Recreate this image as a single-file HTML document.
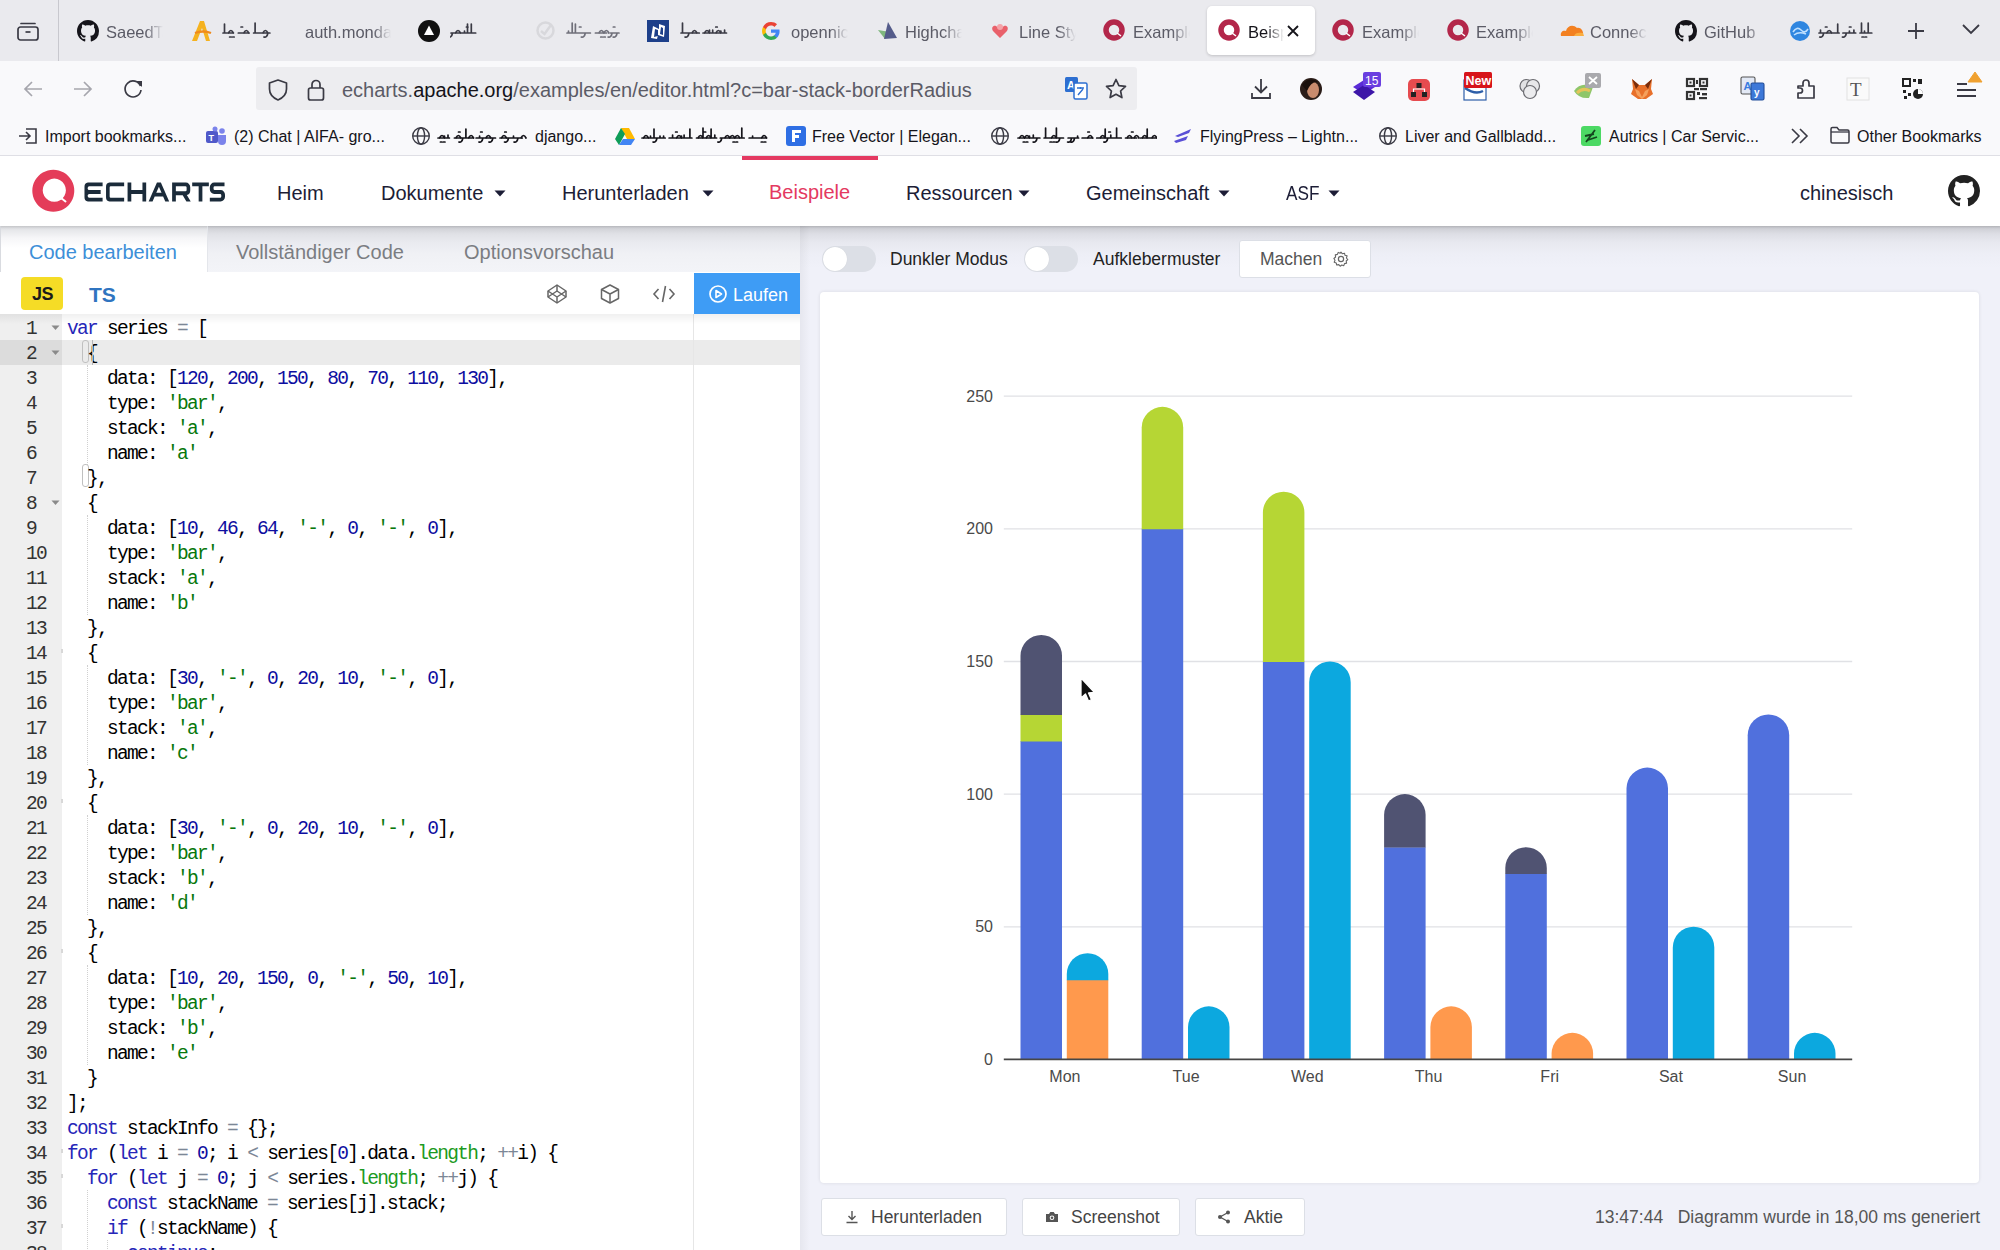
<!DOCTYPE html>
<html><head><meta charset="utf-8"><style>
*{box-sizing:border-box;margin:0;padding:0}
html,body{width:2000px;height:1250px;overflow:hidden;background:#fff;font-family:"Liberation Sans",sans-serif;position:relative}
.a{position:absolute}
#tabbar{left:0;top:0;width:2000px;height:61px;background:#eaeaee}
#toolbar{left:0;top:61px;width:2000px;height:95px;background:#f9f9fb}
#bmsep{left:0;top:155px;width:2000px;height:1px;background:#e0e0e6}
#header{left:0;top:156px;width:2000px;height:70px;background:#fff;z-index:3;box-shadow:0 1px 2px rgba(0,0,0,.08)}
#left{left:0;top:226px;width:800px;height:1024px;background:#fff;overflow:hidden}
#right{left:800px;top:226px;width:1200px;height:1024px;background:#f0f1f9}
.tt{top:22px;font-size:16.5px;line-height:20px;white-space:nowrap;overflow:hidden;-webkit-mask-image:linear-gradient(90deg,#000 calc(100% - 18px),transparent)}
.url{font-size:20px;line-height:27px;white-space:nowrap}
.bm{top:127px;font-size:16px;line-height:20px;color:#15141a;white-space:nowrap}
.nav{font-size:20px;line-height:28px;color:#1c1d36;white-space:nowrap}
.etab{top:13.5px;font-size:20px;line-height:24px;white-space:nowrap}
.gl{left:26px;width:40px;font-family:"Liberation Mono",monospace;font-size:19.5px;line-height:25px;color:#333;letter-spacing:-1.7px}
.cl{left:67px;font-family:"Liberation Mono",monospace;font-size:19.5px;line-height:25px;color:#000;white-space:pre;letter-spacing:-1.7px}
.cl .k{color:#2626b8}.cl .n{color:#0d0da0}.cl .s{color:#08780c}.cl .o{color:#7c8796}.cl .l{color:#1c9a22}
.ctl{top:22px;font-size:17.5px;line-height:22px;color:#222;white-space:nowrap}
.ax{font-family:"Liberation Sans",sans-serif;font-size:16px;fill:#4a4a4a}
</style></head><body>
<div id="tabbar" class="a">
<svg class="a" style="left:16px;top:20px" width="24" height="22" viewBox="0 0 24 22"><rect x="2" y="7" width="20" height="13" rx="2.5" fill="none" stroke="#3a3a44" stroke-width="1.7"/><path d="M5 3.5 H19" stroke="#3a3a44" stroke-width="1.7" stroke-linecap="round"/><path d="M9.5 12 H14.5" stroke="#3a3a44" stroke-width="1.7"/></svg>
<div class="a" style="left:58px;top:0;width:1px;height:61px;background:#c8c8ce"></div>
<svg class="a" style="left:77px;top:20px" width="22" height="22" viewBox="0 0 16 16"><path fill="#15141a" d="M8 0C3.58 0 0 3.58 0 8c0 3.54 2.29 6.53 5.47 7.59.4.07.55-.17.55-.38 0-.19-.01-.82-.01-1.49-2.01.37-2.53-.49-2.69-.94-.09-.23-.48-.94-.82-1.13-.28-.15-.68-.52-.01-.53.63-.01 1.08.58 1.23.82.72 1.21 1.87.87 2.33.66.07-.52.28-.87.51-1.07-1.78-.2-3.64-.89-3.64-3.95 0-.87.31-1.59.82-2.15-.08-.2-.36-1.02.08-2.12 0 0 .67-.21 2.2.82.64-.18 1.32-.27 2-.27.68 0 1.36.09 2 .27 1.53-1.04 2.2-.82 2.2-.82.44 1.1.16 1.92.08 2.12.51.56.82 1.27.82 2.15 0 3.07-1.87 3.75-3.65 3.95.29.25.54.73.54 1.48 0 1.07-.01 1.93-.01 2.2 0 .21.15.46.55.38A8.013 8.013 0 0016 8c0-4.42-3.58-8-8-8z"/></svg>
<div class="a tt" style="left:106px;top:22px;width:57px;color:#5b5b66">SaeedTaherian</div>
<svg class="a" style="left:189px;top:19px" width="24" height="24" viewBox="0 0 24 24"><path d="M3 22 L11 2 L15 2 L21 22 L17 22 L13 9 L8 22 Z" fill="#f5b21f"/><path d="M6 14 Q14 11 22 14" stroke="#f08a1c" stroke-width="2.4" fill="none"/></svg>
<svg class="a" style="left:222px;top:22px;opacity:1.0" width="56" height="18"><path d="M1.0 11 H11.4 M2.5 11 V2 M6.4 11 q2.5 -5 5 0 M7.6 15 h1.6 M10.6 15 h1.6 M16.3 11 H27.2 M21.8 11 q2.5 -5 5 0 M19.0 5 h1.6 M31.6 11 H47.9 M33.1 11 V1 M40.9 11 q2.5 -5 5 0 M45.9 11 q-1 5 -4 4" stroke="#3a3a44" stroke-width="1.7" fill="none" stroke-linecap="round"/></svg>
<div class="a tt" style="left:305px;top:22px;width:86px;color:#5b5b66">auth.monday.com</div>
<svg class="a" style="left:418px;top:20px" width="22" height="22" viewBox="0 0 22 22"><circle cx="11" cy="11" r="11" fill="#111"/><path d="M11 5.5 L16 15 L6 15 Z" fill="#fff"/></svg>
<svg class="a" style="left:450px;top:22px;opacity:1.0" width="33" height="18"><path d="M1.0 11 H25.7 M2.5 11 q-1 5 -4 4 M5.5 11 q2.5 -5 5 0 M14.5 11 V9 M17.5 11 V2 M21.3 11 V2 M16.4 5 h1.6" stroke="#3a3a44" stroke-width="1.7" fill="none" stroke-linecap="round"/></svg>
<svg class="a" style="left:535px;top:20px" width="21" height="21" viewBox="0 0 21 21"><circle cx="10.5" cy="10.5" r="8" fill="none" stroke="#d8d8dc" stroke-width="2.5"/><path d="M6 11 L9.5 14 L16 5" stroke="#d8d8dc" stroke-width="2.5" fill="none"/></svg>
<svg class="a" style="left:566px;top:22px;opacity:0.85" width="54" height="18"><path d="M1.0 11 H24.4 M2.5 11 V9 M6.2 11 V1 M9.4 11 V2 M19.3 11 q-1 5 -4 4 M13.4 5 h1.6 M29.4 11 H40.6 M32.9 11 q2.5 -5 5 0 M37.9 11 q2.5 -5 5 0 M34.7 15 h1.6 M37.7 15 h1.6 M44.6 11 H53.0 M46.1 11 q-1 5 -4 4 M51.1 11 q-1 5 -4 4 M47.3 5 h1.6" stroke="#5b5b66" stroke-width="1.7" fill="none" stroke-linecap="round"/></svg>
<svg class="a" style="left:647px;top:20px" width="22" height="22" viewBox="0 0 22 22"><rect x="0" y="0" width="22" height="22" fill="#1d3f8a"/><path d="M4 18 L6 6 L12 9 L12 4 L18 6 L17 17 L11 15 L10 19 Z" fill="#fff"/><path d="M7 17 L8 9 L11 10 L11 16 Z M13 14 L14 7 L16 8 L16 15 Z" fill="#1d3f8a"/></svg>
<svg class="a" style="left:680px;top:22px;opacity:1.0" width="54" height="18"><path d="M1.0 11 H19.3 M2.5 11 V1 M9.0 11 q-1 5 -4 4 M12.0 11 q2.5 -5 5 0 M23.0 11 H46.5 M24.5 11 q2.5 -5 5 0 M29.5 11 V8 M32.7 11 V8 M35.9 11 q2.5 -5 5 0 M40.9 11 V9 M44.6 11 V8 M35.7 5 h1.6" stroke="#3a3a44" stroke-width="1.7" fill="none" stroke-linecap="round"/></svg>
<svg class="a" style="left:761px;top:21px" width="20" height="20" viewBox="0 0 20 20"><path d="M18.6 10.2c0-.6-.1-1.2-.2-1.8H10v3.4h4.8c-.2 1.1-.8 2-1.8 2.7v2.2h2.9c1.7-1.6 2.7-3.9 2.7-6.5z" fill="#4285f4"/><path d="M10 19c2.4 0 4.5-.8 5.9-2.2L13 14.6c-.8.5-1.8.9-3 .9-2.3 0-4.3-1.6-5-3.7H2v2.3C3.4 17 6.5 19 10 19z" fill="#34a853"/><path d="M5 11.8c-.2-.5-.3-1.1-.3-1.8s.1-1.2.3-1.8V5.9H2C1.4 7.1 1 8.5 1 10s.4 2.9 1 4.1l3-2.3z" fill="#fbbc05"/><path d="M10 4.6c1.3 0 2.5.5 3.4 1.3l2.6-2.6C14.5 1.9 12.4 1 10 1 6.5 1 3.4 3 2 5.9l3 2.3c.7-2.1 2.7-3.6 5-3.6z" fill="#ea4335"/></svg>
<div class="a tt" style="left:791px;top:22px;width:57px;color:#5b5b66">opennic.org</div>
<svg class="a" style="left:876px;top:20px" width="22" height="22" viewBox="0 0 22 22"><path d="M2 10 L9 19 L14 12 Z" fill="#7fb77e"/><path d="M12 2 L8 19 L21 18 Z" fill="#545b8a"/></svg>
<div class="a tt" style="left:905px;top:22px;width:57px;color:#5b5b66">Highcharts</div>
<svg class="a" style="left:990px;top:21px" width="20" height="20" viewBox="0 0 20 20"><path d="M10 17 L3 10 C1 7 3 4 6 5 L10 8 L14 5 C17 4 19 7 17 10 Z" fill="#e9616b"/><circle cx="10" cy="6" r="3" fill="#f5a3a8"/></svg>
<div class="a tt" style="left:1019px;top:22px;width:57px;color:#5b5b66">Line Style</div>
<svg class="a" style="left:1103px;top:19px" width="22" height="22" viewBox="0 0 22 22"><circle cx="11" cy="11" r="8" fill="none" stroke="#b3274a" stroke-width="5.5"/><path d="M14 14 l4 3" stroke="#fff" stroke-width="1.5"/></svg>
<div class="a tt" style="left:1133px;top:22px;width:57px;color:#5b5b66">Examples</div>
<div class="a" style="left:1207px;top:6px;width:108px;height:49px;background:#fff;border-radius:5px;box-shadow:0 1px 3px rgba(0,0,0,.18)"></div>
<svg class="a" style="left:1218px;top:19px" width="22" height="22" viewBox="0 0 22 22"><circle cx="11" cy="11" r="8" fill="none" stroke="#b3274a" stroke-width="5.5"/><path d="M14 14 l4 3" stroke="#fff" stroke-width="1.5"/></svg>
<div class="a tt" style="left:1248px;top:22px;width:36px;color:#15141a">Beispiele</div>
<svg class="a" style="left:1286px;top:24px" width="14" height="14" viewBox="0 0 14 14"><path d="M2 2 L12 12 M12 2 L2 12" stroke="#15141a" stroke-width="1.8"/></svg>
<svg class="a" style="left:1332px;top:19px" width="22" height="22" viewBox="0 0 22 22"><circle cx="11" cy="11" r="8" fill="none" stroke="#b3274a" stroke-width="5.5"/><path d="M14 14 l4 3" stroke="#fff" stroke-width="1.5"/></svg>
<div class="a tt" style="left:1362px;top:22px;width:57px;color:#5b5b66">Examples</div>
<svg class="a" style="left:1447px;top:19px" width="22" height="22" viewBox="0 0 22 22"><circle cx="11" cy="11" r="8" fill="none" stroke="#b3274a" stroke-width="5.5"/><path d="M14 14 l4 3" stroke="#fff" stroke-width="1.5"/></svg>
<div class="a tt" style="left:1476px;top:22px;width:57px;color:#5b5b66">Examples</div>
<svg class="a" style="left:1559px;top:23px" width="26" height="14" viewBox="0 0 26 14"><path d="M2 13 C1 9 4 7 7 8 C8 3 14 1 18 5 C21 4 25 7 24 13 Z" fill="#f38020"/><path d="M15 13 C16 10 19 9 24 10 L25 13 Z" fill="#faae40"/></svg>
<div class="a tt" style="left:1590px;top:22px;width:57px;color:#5b5b66">Connect</div>
<svg class="a" style="left:1675px;top:20px" width="22" height="22" viewBox="0 0 16 16"><path fill="#15141a" d="M8 0C3.58 0 0 3.58 0 8c0 3.54 2.29 6.53 5.47 7.59.4.07.55-.17.55-.38 0-.19-.01-.82-.01-1.49-2.01.37-2.53-.49-2.69-.94-.09-.23-.48-.94-.82-1.13-.28-.15-.68-.52-.01-.53.63-.01 1.08.58 1.23.82.72 1.21 1.87.87 2.33.66.07-.52.28-.87.51-1.07-1.78-.2-3.64-.89-3.64-3.95 0-.87.31-1.59.82-2.15-.08-.2-.36-1.02.08-2.12 0 0 .67-.21 2.2.82.64-.18 1.32-.27 2-.27.68 0 1.36.09 2 .27 1.53-1.04 2.2-.82 2.2-.82.44 1.1.16 1.92.08 2.12.51.56.82 1.27.82 2.15 0 3.07-1.87 3.75-3.65 3.95.29.25.54.73.54 1.48 0 1.07-.01 1.93-.01 2.2 0 .21.15.46.55.38A8.013 8.013 0 0016 8c0-4.42-3.58-8-8-8z"/></svg>
<div class="a tt" style="left:1704px;top:22px;width:60px;color:#5b5b66">GitHub</div>
<svg class="a" style="left:1789px;top:20px" width="22" height="22" viewBox="0 0 22 22"><circle cx="11" cy="11" r="10" fill="#2f86e0"/><path d="M4 12 Q8 6 12 10 T19 9 M5 15 Q10 11 17 14" stroke="#bfe0ff" stroke-width="1.6" fill="none"/></svg>
<svg class="a" style="left:1818px;top:22px;opacity:1.0" width="57" height="18"><path d="M1.0 11 H21.1 M2.5 11 V8 M5.7 11 q-1 5 -4 4 M8.7 11 q2.5 -5 5 0 M19.7 11 V2 M7.4 5 h1.6 M24.9 11 H37.7 M28.4 11 q-1 5 -4 4 M31.4 11 V9 M35.9 11 V8 M31.4 5 h1.6 M42.0 11 H53.8 M43.5 11 V1 M46.5 11 V9 M50.2 11 V1 M44.0 15 h1.6 M47.0 15 h1.6" stroke="#3a3a44" stroke-width="1.7" fill="none" stroke-linecap="round"/></svg>
<svg class="a" style="left:1906px;top:21px" width="20" height="20" viewBox="0 0 20 20"><path d="M10 2 V18 M2 10 H18" stroke="#3a3a44" stroke-width="1.8"/></svg>
<svg class="a" style="left:1961px;top:22px" width="20" height="14" viewBox="0 0 20 14"><path d="M2 3 L10 11 L18 3" stroke="#3a3a44" stroke-width="1.8" fill="none"/></svg>
</div>
<div id="toolbar" class="a">
<svg class="a" style="left:22px;top:18px" width="22" height="20" viewBox="0 0 22 20"><path d="M20 10 H3 M10 3 L3 10 L10 17" stroke="#a6a6ad" stroke-width="1.7" fill="none"/></svg>
<svg class="a" style="left:72px;top:18px" width="22" height="20" viewBox="0 0 22 20"><path d="M2 10 H19 M12 3 L19 10 L12 17" stroke="#a6a6ad" stroke-width="1.7" fill="none"/></svg>
<svg class="a" style="left:122px;top:17px" width="22" height="22" viewBox="0 0 22 22"><path d="M18.5 8 A8 8 0 1 0 19 12" stroke="#3a3a44" stroke-width="1.7" fill="none"/><path d="M14 3 L20 3 L20 9 Z" fill="#3a3a44"/></svg>
<div class="a" style="left:256px;top:6px;width:881px;height:43px;background:#ededf0;border-radius:3px"></div>
<svg class="a" style="left:267px;top:17px" width="22" height="24" viewBox="0 0 22 24"><path d="M11 2 L19.5 5 V11 C19.5 16.5 15.5 20 11 22 C6.5 20 2.5 16.5 2.5 11 V5 Z" stroke="#3a3a44" stroke-width="1.7" fill="none" stroke-linejoin="round"/></svg>
<svg class="a" style="left:306px;top:17px" width="20" height="24" viewBox="0 0 20 24"><rect x="2.5" y="10" width="15" height="12" rx="2" stroke="#3a3a44" stroke-width="1.7" fill="none"/><path d="M6 10 V6.5 a4 4 0 0 1 8 0 V10" stroke="#3a3a44" stroke-width="1.7" fill="none"/></svg>
<div class="a url" style="left:342px;top:16px"><span style="color:#5b5b66">echarts.</span><span style="color:#15141a">apache.org</span><span style="color:#5b5b66">/examples/en/editor.html?c=bar-stack-borderRadius</span></div>
<svg class="a" style="left:1064px;top:15px" width="24" height="24" viewBox="0 0 24 24"><rect x="1" y="1" width="13" height="15" rx="1.5" fill="#2d6fd1"/><text x="3" y="13" font-size="11" font-family="Liberation Sans" font-weight="bold" fill="#fff">A</text><rect x="10" y="7" width="13" height="16" rx="1.5" fill="#fff" stroke="#2d6fd1" stroke-width="1.5"/><path d="M13 12 H20 M16.5 11 V13 M14 19 L19 13" stroke="#2d6fd1" stroke-width="1.4" fill="none"/></svg>
<svg class="a" style="left:1104px;top:16px" width="24" height="24" viewBox="0 0 24 24"><path d="M12 2.5 L14.9 8.6 L21.5 9.4 L16.6 14 L17.9 20.6 L12 17.3 L6.1 20.6 L7.4 14 L2.5 9.4 L9.1 8.6 Z" stroke="#3a3a44" stroke-width="1.7" fill="none" stroke-linejoin="round"/></svg>
<svg class="a" style="left:1249px;top:16px" width="24" height="24" viewBox="0 0 24 24"><path d="M12 2 V15 M6 9.5 L12 15.5 L18 9.5 M3 16 V21 H21 V16" stroke="#3a3a44" stroke-width="1.8" fill="none"/></svg>
<svg class="a" style="left:1299px;top:16px" width="24" height="24" viewBox="0 0 24 24"><circle cx="12" cy="12" r="11" fill="#2b1d18"/><ellipse cx="14" cy="13" rx="6" ry="8" fill="#c98c6e"/><path d="M3 8 Q10 -1 19 5 Q12 4 8 14 Z" fill="#1a100c"/></svg>
<svg class="a" style="left:1350px;top:10px" width="34" height="32" viewBox="0 0 34 32"><path d="M3 16 L14 9 L25 16 L14 23 Z" fill="#5a2bd6"/><path d="M3 21 L14 14 L25 21 L14 29 Z" fill="#3d16a8"/><rect x="13" y="1" width="18" height="15" rx="2" fill="#6a3fe0"/><text x="15" y="13.5" font-size="12" font-family="Liberation Sans" fill="#fff">15</text></svg>
<svg class="a" style="left:1407px;top:17px" width="24" height="24" viewBox="0 0 24 24"><rect x="1" y="1" width="22" height="22" rx="5" fill="#e64b4f"/><rect x="9.5" y="5" width="5" height="5" fill="#222"/><rect x="4" y="14" width="5" height="5" fill="#222"/><rect x="15" y="14" width="5" height="5" fill="#222"/><path d="M6.5 14 V11 H17.5 V14" stroke="#fff" stroke-width="1.2" fill="none"/></svg>
<svg class="a" style="left:1463px;top:10px" width="30" height="30" viewBox="0 0 30 30"><rect x="1" y="9" width="22" height="20" fill="#fff" stroke="#2d5ea8" stroke-width="1.2"/><path d="M2 17 Q12 24 20 20" stroke="#2d5ea8" stroke-width="2.5" fill="none"/><rect x="1" y="1" width="28" height="16" rx="1.5" fill="#d7141a"/><text x="2.5" y="13.5" font-size="12.5" font-family="Liberation Sans" font-weight="bold" fill="#fff">New</text></svg>
<svg class="a" style="left:1518px;top:16px" width="24" height="24" viewBox="0 0 24 24"><circle cx="8.5" cy="9" r="6.5" fill="#e2e2e4" stroke="#6b6b70" stroke-width="1.2"/><circle cx="15" cy="9" r="6.5" fill="#e8e8ea" stroke="#6b6b70" stroke-width="1.2"/><circle cx="12" cy="15" r="6.5" fill="#ececee" stroke="#6b6b70" stroke-width="1.2"/></svg>
<svg class="a" style="left:1571px;top:10px" width="32" height="32" viewBox="0 0 32 32"><path d="M3 20 Q10 10 22 16 L18 27 Q8 28 3 20 Z" fill="#8fc66a"/><path d="M6 22 Q12 16 19 20" stroke="#e5c45a" stroke-width="3" fill="none"/><rect x="14" y="2" width="16" height="15" rx="2" fill="#a9a9ad"/><path d="M18 6 L26 13 M26 6 L18 13" stroke="#fff" stroke-width="1.8"/></svg>
<svg class="a" style="left:1630px;top:16px" width="24" height="24" viewBox="0 0 24 24"><path d="M2 2 L9 8 L15 8 L22 2 L21 12 L23 17 L16 22 L8 22 L1 17 L3 12 Z" fill="#e8702a"/><path d="M5 12 L9 14 L12 20 L15 14 L19 12 L17 18 L12 22 L7 18 Z" fill="#f5a05c"/><path d="M2 2 L9 8 L6 12 Z M22 2 L15 8 L18 12 Z" fill="#7a2d0c"/></svg>
<svg class="a" style="left:1685px;top:16px" width="24" height="24" viewBox="0 0 24 24"><g fill="none" stroke="#333" stroke-width="2.2"><rect x="2" y="2" width="7" height="7"/><rect x="15" y="2" width="7" height="7"/><rect x="2" y="15" width="7" height="7"/></g><g fill="#333"><rect x="4.5" y="4.5" width="2" height="2"/><rect x="17.5" y="4.5" width="2" height="2"/><rect x="4.5" y="17.5" width="2" height="2"/><rect x="11" y="3" width="2" height="4"/><rect x="9" y="11" width="5" height="2.2"/><rect x="15" y="11" width="7" height="2.2"/><rect x="12" y="15" width="3" height="3"/><rect x="17" y="16" width="5" height="2.4"/><rect x="14" y="20" width="8" height="2.2"/></g></svg>
<svg class="a" style="left:1740px;top:15px" width="26" height="26" viewBox="0 0 26 26"><rect x="1" y="1" width="14" height="17" rx="1.5" fill="#e3e9f5" stroke="#555" stroke-width="1.1"/><text x="3.5" y="14" font-size="11" font-family="Liberation Sans" font-weight="bold" fill="#3a7be0">A</text><rect x="11" y="7" width="13" height="17" rx="1.5" fill="#3d78d8" stroke="#234e9a" stroke-width="1.1"/><text x="14" y="20" font-size="10" font-family="Liberation Sans" font-weight="bold" fill="#fff">y</text></svg>
<svg class="a" style="left:1794px;top:16px" width="24" height="24" viewBox="0 0 24 24"><path d="M4 9 H9 V6 a3 3 0 0 1 6 0 V9 H20 V21 H4 V16 h2 a2.5 2.5 0 0 0 0-5 H4 Z" stroke="#3a3a44" stroke-width="1.7" fill="none" stroke-linejoin="round"/></svg>
<svg class="a" style="left:1846px;top:16px" width="24" height="24" viewBox="0 0 24 24"><rect x="1" y="1" width="22" height="22" fill="#fafafa" stroke="#e2e2e2" stroke-width="1"/><text x="4" y="19" font-size="19" font-family="Liberation Serif" fill="#555">T</text></svg>
<svg class="a" style="left:1901px;top:16px" width="24" height="24" viewBox="0 0 24 24"><g fill="none" stroke="#222" stroke-width="2"><rect x="2" y="2" width="7" height="7"/></g><g fill="#222"><rect x="12" y="2" width="3" height="3"/><rect x="17" y="2" width="4" height="5"/><rect x="2" y="13" width="3" height="3"/><rect x="7" y="16" width="3" height="3"/><rect x="3" y="19" width="3" height="3"/><circle cx="17" cy="17" r="5"/></g><path d="M17 17 V12 A5 5 0 0 1 22 17 Z" fill="#fff"/></svg>
<svg class="a" style="left:1954px;top:8px" width="30" height="32" viewBox="0 0 30 32"><path d="M3 15 H13 M3 21 H22 M3 27 H22" stroke="#3a3a44" stroke-width="1.8"/><path d="M21 3 L28 13 H14 Z" fill="#f0a130" stroke="#f0a130" stroke-width="1" stroke-linejoin="round"/></svg>
</div>
<svg class="a" style="left:17px;top:126px" width="22" height="20" viewBox="0 0 22 20"><path d="M9 3 H19 V17 H9 M2 10 H13 M9 6 L13 10 L9 14" stroke="#3a3a44" stroke-width="1.6" fill="none"/></svg>
<div class="a bm" style="left:45px">Import bookmarks...</div>
<svg class="a" style="left:205px;top:126px" width="22" height="20" viewBox="0 0 22 20"><rect x="1" y="5" width="12" height="12" rx="2" fill="#5059c9"/><text x="3.5" y="14.5" font-size="9" font-weight="bold" font-family="Liberation Sans" fill="#fff">T</text><circle cx="17" cy="5" r="2.8" fill="#7b83eb"/><path d="M13 9 H21 V15 a4 4 0 0 1 -8 0 Z" fill="#7b83eb"/><circle cx="10" cy="3" r="2.5" fill="#7b83eb"/></svg>
<div class="a bm" style="left:234px">(2) Chat | AIFA- gro...</div>
<svg class="a" style="left:411px;top:126px" width="20" height="20" viewBox="0 0 20 20"><circle cx="10" cy="10" r="8.3" fill="none" stroke="#3a3a44" stroke-width="1.4"/><ellipse cx="10" cy="10" rx="3.6" ry="8.3" fill="none" stroke="#3a3a44" stroke-width="1.4"/><path d="M2 10 H18" stroke="#3a3a44" stroke-width="1.4"/></svg>
<svg class="a" style="left:437px;top:127px;opacity:1.0" width="95" height="18"><path d="M1.0 11 H12.4 M2.5 11 q2.5 -5 5 0 M7.5 11 V9 M11.0 11 V8 M3.4 15 h1.6 M6.4 15 h1.6 M17.4 11 H35.1 M18.9 11 q2.5 -5 5 0 M25.9 11 q-1 5 -4 4 M28.9 11 V2 M31.6 11 q2.5 -5 5 0 M21.5 5 h1.6 M39.1 11 H58.5 M42.6 11 V9 M45.9 11 q-1 5 -4 4 M48.9 11 q2.5 -5 5 0 M55.9 11 q-1 5 -4 4 M43.6 5 h1.6 M63.0 11 H85.3 M64.5 11 q2.5 -5 5 0 M71.5 11 q-1 5 -4 4 M76.5 11 V9 M81.0 11 q-1 5 -4 4 M84.0 11 q2.5 -5 5 0 M67.7 5 h1.6" stroke="#15141a" stroke-width="1.7" fill="none" stroke-linecap="round"/></svg>
<div class="a bm" style="left:535px">django...</div>
<svg class="a" style="left:614px;top:126px" width="22" height="20" viewBox="0 0 22 20"><path d="M7 2 H15 L21 13 H13 Z" fill="#ffba00"/><path d="M7 2 L1 13 L5 19 L11 8 Z" fill="#0f9d58"/><path d="M5 19 H17 L21 13 H9 Z" fill="#4285f4"/></svg>
<svg class="a" style="left:641px;top:127px;opacity:1.0" width="128" height="18"><path d="M1.0 11 H24.2 M2.5 11 q2.5 -5 5 0 M9.5 11 V9 M13.0 11 V2 M16.0 11 q-1 5 -4 4 M19.0 11 V9 M22.6 11 V9 M28.1 11 H50.9 M31.6 11 V8 M35.5 11 q2.5 -5 5 0 M40.5 11 V9 M43.1 11 V8 M48.9 11 V2 M34.6 5 h1.6 M55.5 11 H75.6 M57.0 11 q2.5 -5 5 0 M62.0 11 V1 M65.1 11 q2.5 -5 5 0 M70.1 11 V2 M73.8 11 V8 M63.1 5 h1.6 M79.3 11 H103.2 M80.8 11 q-1 5 -4 4 M83.8 11 q2.5 -5 5 0 M88.8 11 q2.5 -5 5 0 M93.8 11 q2.5 -5 5 0 M100.8 11 V1 M92.0 15 h1.6 M95.0 15 h1.6 M108.1 11 H124.2 M111.6 11 V9 M120.6 11 q2.5 -5 5 0 M120.2 15 h1.6 M123.2 15 h1.6" stroke="#15141a" stroke-width="1.7" fill="none" stroke-linecap="round"/></svg>
<svg class="a" style="left:785px;top:125px" width="22" height="22" viewBox="0 0 22 22"><rect x="1" y="1" width="20" height="20" rx="3" fill="#2f6fe4"/><path d="M7 5 H16 V8 H10 V10 H14 V13 H10 V17 H7 Z" fill="#fff"/></svg>
<div class="a bm" style="left:812px">Free Vector | Elegan...</div>
<svg class="a" style="left:990px;top:126px" width="20" height="20" viewBox="0 0 20 20"><circle cx="10" cy="10" r="8.3" fill="none" stroke="#3a3a44" stroke-width="1.4"/><ellipse cx="10" cy="10" rx="3.6" ry="8.3" fill="none" stroke="#3a3a44" stroke-width="1.4"/><path d="M2 10 H18" stroke="#3a3a44" stroke-width="1.4"/></svg>
<svg class="a" style="left:1017px;top:127px;opacity:1.0" width="140" height="18"><path d="M1.0 11 H22.9 M2.5 11 q2.5 -5 5 0 M7.5 11 q2.5 -5 5 0 M12.5 11 V9 M16.3 11 V8 M20.1 11 q-1 5 -4 4 M6.2 15 h1.6 M9.2 15 h1.6 M27.1 11 H46.5 M28.6 11 V1 M34.4 11 q2.5 -5 5 0 M39.4 11 V1 M42.9 11 q-1 5 -4 4 M33.0 15 h1.6 M36.0 15 h1.6 M51.1 11 H61.6 M54.6 11 q-1 5 -4 4 M57.6 11 q-1 5 -4 4 M60.6 11 V9 M65.1 11 H75.9 M70.6 11 q2.5 -5 5 0 M70.8 5 h1.6 M79.7 11 H104.3 M83.2 11 q2.5 -5 5 0 M88.2 11 V2 M90.8 11 q-1 5 -4 4 M93.8 11 V8 M99.6 11 V1 M91.8 5 h1.6 M108.5 11 H119.7 M110.0 11 q2.5 -5 5 0 M117.0 11 q2.5 -5 5 0 M114.5 5 h1.6 M123.7 11 H139.0 M125.2 11 q2.5 -5 5 0 M130.2 11 V2 M134.9 11 q2.5 -5 5 0" stroke="#15141a" stroke-width="1.7" fill="none" stroke-linecap="round"/></svg>
<svg class="a" style="left:1172px;top:126px" width="22" height="20" viewBox="0 0 22 20"><path d="M3 10 L19 3 L17 7 L6 11 Z M2 15 L16 10 L14 14 L4 17 Z" fill="#5a4fd6"/></svg>
<div class="a bm" style="left:1200px">FlyingPress – Lightn...</div>
<svg class="a" style="left:1378px;top:126px" width="20" height="20" viewBox="0 0 20 20"><circle cx="10" cy="10" r="8.3" fill="none" stroke="#3a3a44" stroke-width="1.4"/><ellipse cx="10" cy="10" rx="3.6" ry="8.3" fill="none" stroke="#3a3a44" stroke-width="1.4"/><path d="M2 10 H18" stroke="#3a3a44" stroke-width="1.4"/></svg>
<div class="a bm" style="left:1405px">Liver and Gallbladd...</div>
<svg class="a" style="left:1580px;top:125px" width="22" height="22" viewBox="0 0 22 22"><rect x="1" y="1" width="20" height="20" rx="3" fill="#4cd964"/><path d="M6 17 L15 5 M5 11 L14 9 M8 15 L17 12" stroke="#15451f" stroke-width="1.8"/></svg>
<div class="a bm" style="left:1609px">Autrics | Car Servic...</div>
<svg class="a" style="left:1789px;top:126px" width="22" height="20" viewBox="0 0 22 20"><path d="M3 3 L10 10 L3 17 M11 3 L18 10 L11 17" stroke="#3a3a44" stroke-width="1.6" fill="none"/></svg>
<svg class="a" style="left:1829px;top:125px" width="22" height="20" viewBox="0 0 22 20"><path d="M2 4 a1.5 1.5 0 0 1 1.5-1.5 H8 L10 5 H18.5 a1.5 1.5 0 0 1 1.5 1.5 V16.5 a1.5 1.5 0 0 1 -1.5 1.5 H3.5 A1.5 1.5 0 0 1 2 16.5 Z" stroke="#3a3a44" stroke-width="1.5" fill="none"/><path d="M2 7 H20" stroke="#3a3a44" stroke-width="1.3"/></svg>
<div class="a bm" style="left:1857px">Other Bookmarks</div>
<div id="bmsep" class="a"></div>
<div id="header" class="a">
<svg class="a" style="left:30px;top:12px" width="48" height="46" viewBox="0 0 48 46"><path fill-rule="evenodd" fill="#e43c59" d="M23.3 1.8 A21 21 0 1 1 23.29 1.8 Z M24.3 10.6 A11.6 11.6 0 1 0 24.31 10.6 Z"/><path d="M30.5 29.5 L35.5 33.5" stroke="#fff" stroke-width="2" stroke-linecap="round"/><circle cx="30.8" cy="29.8" r="2" fill="#fff"/></svg>
<svg class="a" style="left:84px;top:25.5px" width="141" height="20" viewBox="0 0.5 144 19" preserveAspectRatio="none"><g fill="#1b2b3a"><path d="M4 1 H19 V4.6 H5.5 A1.8 1.8 0 0 0 5.5 8.2 H17 V11.8 H5.5 A1.8 1.8 0 0 0 5.5 15.4 H19 V19 H4 A4 4 0 0 1 0.5 15 V5 A4 4 0 0 1 4 1 Z"/><path d="M26 1 H41 V4.6 H27.5 A1.2 1.2 0 0 0 26.2 5.8 V14.2 A1.2 1.2 0 0 0 27.5 15.4 H41 V19 H26 A4 4 0 0 1 22.5 15 V5 A4 4 0 0 1 26 1 Z"/><path d="M44.5 1 H48.3 V8.2 H59.7 V1 H63.5 V19 H59.7 V11.8 H48.3 V19 H44.5 Z"/><path d="M66 19 L74.5 1 H78.5 L87 19 H83 L80.8 14.2 H72.2 L70 19 Z M73.8 10.8 H79.2 L76.5 5 Z"/><path d="M90 1 H104 A4.5 4.5 0 0 1 108.5 5.5 V8.5 A4.5 4.5 0 0 1 105 12.9 L109 19 H104.6 L100.8 13 H93.8 V19 H90 Z M93.8 4.6 V9.4 H103.6 A1.2 1.2 0 0 0 104.8 8.2 V5.8 A1.2 1.2 0 0 0 103.6 4.6 Z"/><path d="M110.5 1 H127.5 V4.6 H120.9 V19 H117.1 V4.6 H110.5 Z"/><path d="M133 1 H143.5 V4.6 H133.5 A1.2 1.2 0 0 0 132.3 5.8 V7 A1.2 1.2 0 0 0 133.5 8.2 H139.5 A4.5 4.5 0 0 1 144 12.7 V14.5 A4.5 4.5 0 0 1 139.5 19 H128.5 V15.4 H139 A1.2 1.2 0 0 0 140.2 14.2 V13 A1.2 1.2 0 0 0 139 11.8 H133 A4.5 4.5 0 0 1 128.5 7.3 V5.5 A4.5 4.5 0 0 1 133 1 Z"/></g></svg>
<div class="a nav" style="left:277px;top:22.5px;color:#1c1d36">Heim</div>
<div class="a nav" style="left:381px;top:22.5px;color:#1c1d36">Dokumente</div>
<svg class="a" style="left:494px;top:34px" width="12" height="7" viewBox="0 0 12 7"><path d="M0.5 0.5 H11.5 L6 6.5 Z" fill="#1c1d36"/></svg>
<div class="a nav" style="left:562px;top:22.5px;color:#1c1d36">Herunterladen</div>
<svg class="a" style="left:702px;top:34px" width="12" height="7" viewBox="0 0 12 7"><path d="M0.5 0.5 H11.5 L6 6.5 Z" fill="#1c1d36"/></svg>
<div class="a nav" style="left:769px;top:21.5px;color:#e43961">Beispiele</div>
<div class="a nav" style="left:906px;top:22.5px;color:#1c1d36">Ressourcen</div>
<svg class="a" style="left:1018px;top:34px" width="12" height="7" viewBox="0 0 12 7"><path d="M0.5 0.5 H11.5 L6 6.5 Z" fill="#1c1d36"/></svg>
<div class="a nav" style="left:1086px;top:22.5px;color:#1c1d36">Gemeinschaft</div>
<svg class="a" style="left:1218px;top:34px" width="12" height="7" viewBox="0 0 12 7"><path d="M0.5 0.5 H11.5 L6 6.5 Z" fill="#1c1d36"/></svg>
<div class="a nav" style="left:1286px;top:22.5px;color:#1c1d36;transform:scaleX(0.86);transform-origin:0 0">ASF</div>
<svg class="a" style="left:1328px;top:34px" width="12" height="7" viewBox="0 0 12 7"><path d="M0.5 0.5 H11.5 L6 6.5 Z" fill="#1c1d36"/></svg>
<div class="a" style="left:742px;top:0;width:136px;height:4px;background:#e43961"></div>
<div class="a nav" style="left:1800px;top:22.5px">chinesisch</div>
<svg class="a" style="left:1948px;top:19px" width="32" height="32" viewBox="0 0 16 16"><path fill="#222" d="M8 0C3.58 0 0 3.58 0 8c0 3.54 2.29 6.53 5.47 7.59.4.07.55-.17.55-.38 0-.19-.01-.82-.01-1.49-2.01.37-2.53-.49-2.69-.94-.09-.23-.48-.94-.82-1.130-.28-.15-.68-.52-.01-.53.63-.01 1.08.58 1.23.82.72 1.21 1.87.87 2.33.66.07-.52.28-.87.51-1.07-1.78-.2-3.64-.89-3.64-3.95 0-.87.31-1.59.82-2.150-.08-.2-.36-1.020.08-2.12 0 0 .67-.21 2.2.82.64-.18 1.32-.27 2-.27.68 0 1.36.09 2 .27 1.53-1.04 2.2-.82 2.2-.82.44 1.1.16 1.92.08 2.12.51.56.82 1.27.82 2.15 0 3.07-1.87 3.75-3.65 3.95.29.25.54.73.54 1.48 0 1.07-.01 1.93-.01 2.2 0 .21.15.46.55.38A8.013 8.013 0 0016 8c0-4.42-3.58-8-8-8z"/></svg>
</div>
<div id="left" class="a">
<div class="a" style="left:0;top:0;width:800px;height:46px;background:linear-gradient(#c4c5ca,#d3d4d9 3px,#e0e1e6 8px,#e9eaef 16px,#f0f1f5 28px,#f3f4f8)"></div>
<div class="a" style="left:0;top:0;width:208px;height:47px;background:linear-gradient(#d2d3d7,#e6e7ea 4px,#f6f6f8 12px,#fff 22px);border-left:1px solid #d9dbe0;border-right:1px solid #e4e6eb"></div>
<div class="a etab" style="left:29px;color:#3d8fd8">Code bearbeiten</div>
<div class="a etab" style="left:236px;color:#7b7d82">Vollständiger Code</div>
<div class="a etab" style="left:464px;color:#7b7d82">Optionsvorschau</div>
<div class="a" style="left:0;top:46px;width:800px;height:42px;background:#fff"></div>
<div class="a" style="left:21px;top:51px;width:42px;height:33px;background:#f5dc26;border-radius:4px"></div>
<div class="a" style="left:32px;top:58px;font-size:18px;font-weight:bold;color:#1a1a1a;letter-spacing:-0.5px">JS</div>
<div class="a" style="left:89px;top:57px;font-size:21px;font-weight:bold;color:#2f74c0">TS</div>
<svg class="a" style="left:545px;top:56px" width="24" height="24" viewBox="0 0 24 24"><g fill="none" stroke="#666" stroke-width="1.5" stroke-linejoin="round"><path d="M12 3 L21 9 V15 L12 21 L3 15 V9 Z"/><path d="M3 9 L12 15 L21 9 M3 15 L12 9 L21 15 M12 3 V9 M12 15 V21"/></g></svg>
<svg class="a" style="left:598px;top:56px" width="24" height="24" viewBox="0 0 24 24"><g fill="none" stroke="#666" stroke-width="1.5" stroke-linejoin="round"><path d="M12 3 L20.5 7.5 V16.5 L12 21 L3.5 16.5 V7.5 Z"/><path d="M3.5 7.5 L12 12 L20.5 7.5 M12 12 V21"/></g></svg>
<svg class="a" style="left:652px;top:57px" width="24" height="22" viewBox="0 0 24 22"><g fill="none" stroke="#666" stroke-width="1.6"><path d="M6.5 6 L2 11 L6.5 16 M17.5 6 L22 11 L17.5 16 M13.5 3 L10.5 19"/></g></svg>
<div class="a" style="left:694px;top:47px;width:106px;height:41px;background:#3e9cf5"></div>
<svg class="a" style="left:708px;top:58px" width="20" height="20" viewBox="0 0 20 20"><circle cx="10" cy="10" r="8" fill="none" stroke="#fff" stroke-width="1.7"/><path d="M8 6.5 L13.5 10 L8 13.5 Z" fill="none" stroke="#fff" stroke-width="1.6" stroke-linejoin="round"/></svg>
<div class="a" style="left:733px;top:59px;font-size:18px;color:#fff">Laufen</div>
<div class="a" style="left:0;top:88px;width:62px;height:936px;background:#efefef"></div>
<div class="a" style="left:0;top:113.5px;width:62px;height:25px;background:#dcdcdc"></div>
<div class="a" style="left:62px;top:113.5px;width:738px;height:25px;background:#ebebeb"></div>
<div class="a" style="left:693px;top:88px;width:1px;height:936px;background:#e6e6e6"></div>
<div class="a" style="left:0;top:88px;width:800px;height:10px;background:linear-gradient(rgba(0,0,0,.06),rgba(0,0,0,0))"></div>
<div class="a" style="left:87px;top:138.5px;width:1px;height:100px;border-left:1px dotted #d0d0d0"></div>
<div class="a" style="left:87px;top:288.5px;width:1px;height:100px;border-left:1px dotted #d0d0d0"></div>
<div class="a" style="left:87px;top:438.5px;width:1px;height:100px;border-left:1px dotted #d0d0d0"></div>
<div class="a" style="left:87px;top:588.5px;width:1px;height:100px;border-left:1px dotted #d0d0d0"></div>
<div class="a" style="left:87px;top:738.5px;width:1px;height:100px;border-left:1px dotted #d0d0d0"></div>
<div class="a" style="left:87px;top:963.5px;width:1px;height:75px;border-left:1px dotted #d0d0d0"></div>
<div class="a" style="left:107px;top:1013.5px;width:1px;height:25px;border-left:1px dotted #d0d0d0"></div>
<div class="a" style="left:82px;top:114px;width:7px;height:23px;border:1px solid #c0c0c0;border-radius:3px"></div>
<div class="a" style="left:82px;top:238px;width:7px;height:23px;border:1px solid #c0c0c0;border-radius:3px"></div>
<div class="a gl" style="top:91.0px">1</div>
<div class="a gl" style="top:116.0px">2</div>
<div class="a gl" style="top:141.0px">3</div>
<div class="a gl" style="top:166.0px">4</div>
<div class="a gl" style="top:191.0px">5</div>
<div class="a gl" style="top:216.0px">6</div>
<div class="a gl" style="top:241.0px">7</div>
<div class="a gl" style="top:266.0px">8</div>
<div class="a gl" style="top:291.0px">9</div>
<div class="a gl" style="top:316.0px">10</div>
<div class="a gl" style="top:341.0px">11</div>
<div class="a gl" style="top:366.0px">12</div>
<div class="a gl" style="top:391.0px">13</div>
<div class="a gl" style="top:416.0px">14</div>
<div class="a gl" style="top:441.0px">15</div>
<div class="a gl" style="top:466.0px">16</div>
<div class="a gl" style="top:491.0px">17</div>
<div class="a gl" style="top:516.0px">18</div>
<div class="a gl" style="top:541.0px">19</div>
<div class="a gl" style="top:566.0px">20</div>
<div class="a gl" style="top:591.0px">21</div>
<div class="a gl" style="top:616.0px">22</div>
<div class="a gl" style="top:641.0px">23</div>
<div class="a gl" style="top:666.0px">24</div>
<div class="a gl" style="top:691.0px">25</div>
<div class="a gl" style="top:716.0px">26</div>
<div class="a gl" style="top:741.0px">27</div>
<div class="a gl" style="top:766.0px">28</div>
<div class="a gl" style="top:791.0px">29</div>
<div class="a gl" style="top:816.0px">30</div>
<div class="a gl" style="top:841.0px">31</div>
<div class="a gl" style="top:866.0px">32</div>
<div class="a gl" style="top:891.0px">33</div>
<div class="a gl" style="top:916.0px">34</div>
<div class="a gl" style="top:941.0px">35</div>
<div class="a gl" style="top:966.0px">36</div>
<div class="a gl" style="top:991.0px">37</div>
<div class="a gl" style="top:1016.0px">38</div>
<svg class="a" style="left:51px;top:98.5px" width="9" height="6" viewBox="0 0 9 6"><path d="M0.5 0.5 H8.5 L4.5 5 Z" fill="#8a8a8a"/></svg>
<svg class="a" style="left:51px;top:123.5px" width="9" height="6" viewBox="0 0 9 6"><path d="M0.5 0.5 H8.5 L4.5 5 Z" fill="#8a8a8a"/></svg>
<svg class="a" style="left:51px;top:273.5px" width="9" height="6" viewBox="0 0 9 6"><path d="M0.5 0.5 H8.5 L4.5 5 Z" fill="#8a8a8a"/></svg>
<div class="a" style="left:61px;top:422.5px;width:2px;height:4px;background:#d8d8d8"></div>
<div class="a" style="left:61px;top:572.5px;width:2px;height:4px;background:#d8d8d8"></div>
<div class="a" style="left:61px;top:722.5px;width:2px;height:4px;background:#d8d8d8"></div>
<div class="a" style="left:61px;top:922.5px;width:2px;height:4px;background:#d8d8d8"></div>
<div class="a" style="left:61px;top:947.5px;width:2px;height:4px;background:#d8d8d8"></div>
<div class="a" style="left:61px;top:997.5px;width:2px;height:4px;background:#d8d8d8"></div>
<div class="a cl" style="top:91.0px"><span class="k">var</span> series <span class="o">=</span> [</div>
<div class="a cl" style="top:116.0px">  {</div>
<div class="a cl" style="top:141.0px">    data: [<span class="n">120</span>, <span class="n">200</span>, <span class="n">150</span>, <span class="n">80</span>, <span class="n">70</span>, <span class="n">110</span>, <span class="n">130</span>],</div>
<div class="a cl" style="top:166.0px">    type: <span class="s">&#x27;bar&#x27;</span>,</div>
<div class="a cl" style="top:191.0px">    stack: <span class="s">&#x27;a&#x27;</span>,</div>
<div class="a cl" style="top:216.0px">    name: <span class="s">&#x27;a&#x27;</span></div>
<div class="a cl" style="top:241.0px">  },</div>
<div class="a cl" style="top:266.0px">  {</div>
<div class="a cl" style="top:291.0px">    data: [<span class="n">10</span>, <span class="n">46</span>, <span class="n">64</span>, <span class="s">&#x27;-&#x27;</span>, <span class="n">0</span>, <span class="s">&#x27;-&#x27;</span>, <span class="n">0</span>],</div>
<div class="a cl" style="top:316.0px">    type: <span class="s">&#x27;bar&#x27;</span>,</div>
<div class="a cl" style="top:341.0px">    stack: <span class="s">&#x27;a&#x27;</span>,</div>
<div class="a cl" style="top:366.0px">    name: <span class="s">&#x27;b&#x27;</span></div>
<div class="a cl" style="top:391.0px">  },</div>
<div class="a cl" style="top:416.0px">  {</div>
<div class="a cl" style="top:441.0px">    data: [<span class="n">30</span>, <span class="s">&#x27;-&#x27;</span>, <span class="n">0</span>, <span class="n">20</span>, <span class="n">10</span>, <span class="s">&#x27;-&#x27;</span>, <span class="n">0</span>],</div>
<div class="a cl" style="top:466.0px">    type: <span class="s">&#x27;bar&#x27;</span>,</div>
<div class="a cl" style="top:491.0px">    stack: <span class="s">&#x27;a&#x27;</span>,</div>
<div class="a cl" style="top:516.0px">    name: <span class="s">&#x27;c&#x27;</span></div>
<div class="a cl" style="top:541.0px">  },</div>
<div class="a cl" style="top:566.0px">  {</div>
<div class="a cl" style="top:591.0px">    data: [<span class="n">30</span>, <span class="s">&#x27;-&#x27;</span>, <span class="n">0</span>, <span class="n">20</span>, <span class="n">10</span>, <span class="s">&#x27;-&#x27;</span>, <span class="n">0</span>],</div>
<div class="a cl" style="top:616.0px">    type: <span class="s">&#x27;bar&#x27;</span>,</div>
<div class="a cl" style="top:641.0px">    stack: <span class="s">&#x27;b&#x27;</span>,</div>
<div class="a cl" style="top:666.0px">    name: <span class="s">&#x27;d&#x27;</span></div>
<div class="a cl" style="top:691.0px">  },</div>
<div class="a cl" style="top:716.0px">  {</div>
<div class="a cl" style="top:741.0px">    data: [<span class="n">10</span>, <span class="n">20</span>, <span class="n">150</span>, <span class="n">0</span>, <span class="s">&#x27;-&#x27;</span>, <span class="n">50</span>, <span class="n">10</span>],</div>
<div class="a cl" style="top:766.0px">    type: <span class="s">&#x27;bar&#x27;</span>,</div>
<div class="a cl" style="top:791.0px">    stack: <span class="s">&#x27;b&#x27;</span>,</div>
<div class="a cl" style="top:816.0px">    name: <span class="s">&#x27;e&#x27;</span></div>
<div class="a cl" style="top:841.0px">  }</div>
<div class="a cl" style="top:866.0px">];</div>
<div class="a cl" style="top:891.0px"><span class="k">const</span> stackInfo <span class="o">=</span> {};</div>
<div class="a cl" style="top:916.0px"><span class="k">for</span> (<span class="k">let</span> i <span class="o">=</span> <span class="n">0</span>; i <span class="o">&lt;</span> series[<span class="n">0</span>].data.<span class="l">length</span>; <span class="o">++</span>i) {</div>
<div class="a cl" style="top:941.0px">  <span class="k">for</span> (<span class="k">let</span> j <span class="o">=</span> <span class="n">0</span>; j <span class="o">&lt;</span> series.<span class="l">length</span>; <span class="o">++</span>j) {</div>
<div class="a cl" style="top:966.0px">    <span class="k">const</span> stackName <span class="o">=</span> series[j].stack;</div>
<div class="a cl" style="top:991.0px">    <span class="k">if</span> (<span class="o">!</span>stackName) {</div>
<div class="a cl" style="top:1016.0px">      <span class="k">continue</span>;</div>
<div class="a" style="left:91.5px;top:114px;width:1.5px;height:25px;background:#b5b5b5"></div>
</div>
<div id="right" class="a">
<div class="a" style="left:0;top:0;width:1200px;height:42px;background:linear-gradient(#bfc0c6,#d0d1d7 3px,#dddee5 8px,#e7e8ef 16px,#edeef6 28px,#f0f1f9)"></div>
<div class="a" style="left:0;top:0;width:10px;height:1024px;background:linear-gradient(90deg,rgba(0,0,0,.045),rgba(0,0,0,0))"></div>
<div class="a" style="left:22px;top:20px;width:54px;height:26px;border-radius:13px;background:#dcdfe6"></div>
<div class="a" style="left:23px;top:21px;width:24px;height:24px;border-radius:12px;background:#fff;box-shadow:0 0 1px rgba(0,0,0,.1)"></div>
<div class="a" style="left:224px;top:20px;width:54px;height:26px;border-radius:13px;background:#dcdfe6"></div>
<div class="a" style="left:225px;top:21px;width:24px;height:24px;border-radius:12px;background:#fff;box-shadow:0 0 1px rgba(0,0,0,.1)"></div>
<div class="a ctl" style="left:90px">Dunkler Modus</div>
<div class="a ctl" style="left:293px">Aufklebermuster</div>
<div class="a" style="left:439px;top:14px;width:132px;height:38px;background:#fff;border:1px solid #dcdfe6;border-radius:3px"></div>
<div class="a ctl" style="left:460px;color:#555">Machen</div>
<svg class="a" style="left:533px;top:25px" width="16" height="16" viewBox="0 0 16 16"><circle cx="8" cy="8" r="2.6" fill="none" stroke="#666" stroke-width="1.2"/><path d="M8 1.2 L9.4 2.8 L11.5 2.2 L12 4.3 L14.1 4.9 L13.4 7 L14.8 8.6 L13.2 10 L13.6 12.1 L11.5 12.6 L10.8 14.7 L8.8 14 L7.2 15.2 L5.8 13.6 L3.7 14 L3.2 11.9 L1.2 11.2 L2 9.2 L0.9 7.5 L2.6 6 L2.3 3.9 L4.4 3.4 L5.2 1.4 L7.2 2.2 Z" fill="none" stroke="#666" stroke-width="1.1" stroke-linejoin="round"/></svg>
<div class="a" style="left:20px;top:66px;width:1159px;height:891px;background:#fff;border-radius:4px;box-shadow:0 0 3px 1px rgba(0,0,0,.06)"></div>
<div class="a" style="left:21px;top:972px;width:186px;height:38px;background:#fff;border:1px solid #dcdfe6;border-radius:3px"></div>
<div class="a" style="left:222px;top:972px;width:158px;height:38px;background:#fff;border:1px solid #dcdfe6;border-radius:3px"></div>
<div class="a" style="left:395px;top:972px;width:110px;height:38px;background:#fff;border:1px solid #dcdfe6;border-radius:3px"></div>
<svg class="a" style="left:44px;top:983px" width="16" height="16" viewBox="0 0 16 16"><path d="M8 2 V10.5 M4.5 7 L8 10.5 L11.5 7 M2.5 13.5 H13.5" stroke="#555" stroke-width="1.4" fill="none"/></svg>
<div class="a ctl" style="left:71px;top:980px;color:#444">Herunterladen</div>
<svg class="a" style="left:244px;top:983px" width="16" height="16" viewBox="0 0 16 16"><path d="M2 5 H5 L6.3 3 H9.7 L11 5 H14 V13 H2 Z" fill="#555"/><circle cx="8" cy="8.8" r="2.3" fill="#fff"/><circle cx="8" cy="8.8" r="1.3" fill="#555"/></svg>
<div class="a ctl" style="left:271px;top:980px;color:#444">Screenshot</div>
<svg class="a" style="left:416px;top:983px" width="16" height="16" viewBox="0 0 16 16"><circle cx="12" cy="3.5" r="2" fill="#555"/><circle cx="4" cy="8" r="2" fill="#555"/><circle cx="12" cy="12.5" r="2" fill="#555"/><path d="M12 3.5 L4 8 L12 12.5" stroke="#555" stroke-width="1.3" fill="none"/></svg>
<div class="a ctl" style="left:444px;top:980px;color:#444">Aktie</div>
<div class="a ctl" style="left:795px;top:980px;color:#555;width:384px;text-align:right">13:47:44&nbsp;&nbsp; Diagramm wurde in 18,00 ms generiert</div>
</div>
<svg class="a" style="left:820px;top:292px" width="1159" height="891" viewBox="820 292 1159 891">
<path d="M1003.8 926.8 H1852.2" stroke="#e0e1e5" stroke-width="1.3"/>
<path d="M1003.8 794.1 H1852.2" stroke="#e0e1e5" stroke-width="1.3"/>
<path d="M1003.8 661.5 H1852.2" stroke="#e0e1e5" stroke-width="1.3"/>
<path d="M1003.8 528.8 H1852.2" stroke="#e0e1e5" stroke-width="1.3"/>
<path d="M1003.8 396.2 H1852.2" stroke="#e0e1e5" stroke-width="1.3"/>
<text x="993" y="1064.9" text-anchor="end" class="ax">0</text>
<text x="993" y="932.3" text-anchor="end" class="ax">50</text>
<text x="993" y="799.6" text-anchor="end" class="ax">100</text>
<text x="993" y="667.0" text-anchor="end" class="ax">150</text>
<text x="993" y="534.3" text-anchor="end" class="ax">200</text>
<text x="993" y="401.7" text-anchor="end" class="ax">250</text>
<path d="M1020.50 1059.80 V741.06 H1062.00 V1059.80 Z" fill="#5070dd"/>
<path d="M1020.50 741.46 V714.54 H1062.00 V741.46 Z" fill="#b6d634"/>
<path d="M1020.50 714.94 V655.70 A20.75 20.75 0 0 1 1041.25 634.95 H1041.25 A20.75 20.75 0 0 1 1062.00 655.70 V714.94 Z" fill="#505372"/>
<path d="M1066.80 1059.80 V979.82 H1108.30 V1059.80 Z" fill="#ff994d"/>
<path d="M1066.80 980.22 V974.04 A20.75 20.75 0 0 1 1087.55 953.29 H1087.55 A20.75 20.75 0 0 1 1108.30 974.04 V980.22 Z" fill="#0ca8df"/>
<text x="1064.9" y="1082" text-anchor="middle" class="ax">Mon</text>
<path d="M1141.70 1059.80 V528.84 H1183.20 V1059.80 Z" fill="#5070dd"/>
<path d="M1141.70 529.24 V427.56 A20.75 20.75 0 0 1 1162.45 406.81 H1162.45 A20.75 20.75 0 0 1 1183.20 427.56 V529.24 Z" fill="#b6d634"/>
<path d="M1188.00 1059.80 V1027.09 A20.75 20.75 0 0 1 1208.75 1006.34 H1208.75 A20.75 20.75 0 0 1 1229.50 1027.09 V1059.80 Z" fill="#0ca8df"/>
<text x="1186.1" y="1082" text-anchor="middle" class="ax">Tue</text>
<path d="M1262.90 1059.80 V661.48 H1304.40 V1059.80 Z" fill="#5070dd"/>
<path d="M1262.90 661.88 V512.45 A20.75 20.75 0 0 1 1283.65 491.70 H1283.65 A20.75 20.75 0 0 1 1304.40 512.45 V661.88 Z" fill="#b6d634"/>
<path d="M1309.20 1059.80 V682.23 A20.75 20.75 0 0 1 1329.95 661.48 H1329.95 A20.75 20.75 0 0 1 1350.70 682.23 V1059.80 Z" fill="#0ca8df"/>
<text x="1307.3" y="1082" text-anchor="middle" class="ax">Wed</text>
<path d="M1384.10 1059.80 V847.18 H1425.60 V1059.80 Z" fill="#5070dd"/>
<path d="M1384.10 847.58 V814.87 A20.75 20.75 0 0 1 1404.85 794.12 H1404.85 A20.75 20.75 0 0 1 1425.60 814.87 V847.58 Z" fill="#505372"/>
<path d="M1430.40 1059.80 V1027.09 A20.75 20.75 0 0 1 1451.15 1006.34 H1451.15 A20.75 20.75 0 0 1 1471.90 1027.09 V1059.80 Z" fill="#ff994d"/>
<text x="1428.5" y="1082" text-anchor="middle" class="ax">Thu</text>
<path d="M1505.30 1059.80 V873.70 H1546.80 V1059.80 Z" fill="#5070dd"/>
<path d="M1505.30 874.10 V867.93 A20.75 20.75 0 0 1 1526.05 847.18 H1526.05 A20.75 20.75 0 0 1 1546.80 867.93 V874.10 Z" fill="#505372"/>
<path d="M1551.60 1059.80 V1053.62 A20.75 20.75 0 0 1 1572.35 1032.87 H1572.35 A20.75 20.75 0 0 1 1593.10 1053.62 V1059.80 Z" fill="#ff994d"/>
<text x="1549.7" y="1082" text-anchor="middle" class="ax">Fri</text>
<path d="M1626.50 1059.80 V788.34 A20.75 20.75 0 0 1 1647.25 767.59 H1647.25 A20.75 20.75 0 0 1 1668.00 788.34 V1059.80 Z" fill="#5070dd"/>
<path d="M1672.80 1059.80 V947.51 A20.75 20.75 0 0 1 1693.55 926.76 H1693.55 A20.75 20.75 0 0 1 1714.30 947.51 V1059.80 Z" fill="#0ca8df"/>
<text x="1670.9" y="1082" text-anchor="middle" class="ax">Sat</text>
<path d="M1747.70 1059.80 V735.29 A20.75 20.75 0 0 1 1768.45 714.54 H1768.45 A20.75 20.75 0 0 1 1789.20 735.29 V1059.80 Z" fill="#5070dd"/>
<path d="M1794.00 1059.80 V1053.62 A20.75 20.75 0 0 1 1814.75 1032.87 H1814.75 A20.75 20.75 0 0 1 1835.50 1053.62 V1059.80 Z" fill="#0ca8df"/>
<text x="1792.1" y="1082" text-anchor="middle" class="ax">Sun</text>
<path d="M1003.8 1059.4 H1852.2" stroke="#464646" stroke-width="1.6"/>
<path d="M1081 678 L1081 698 L1085.5 694 L1088.5 701 L1091.5 699.7 L1088.5 693 L1094.5 692.5 Z" fill="#111" stroke="#fff" stroke-width="1.3" stroke-linejoin="round"/>
</svg>
</body></html>
